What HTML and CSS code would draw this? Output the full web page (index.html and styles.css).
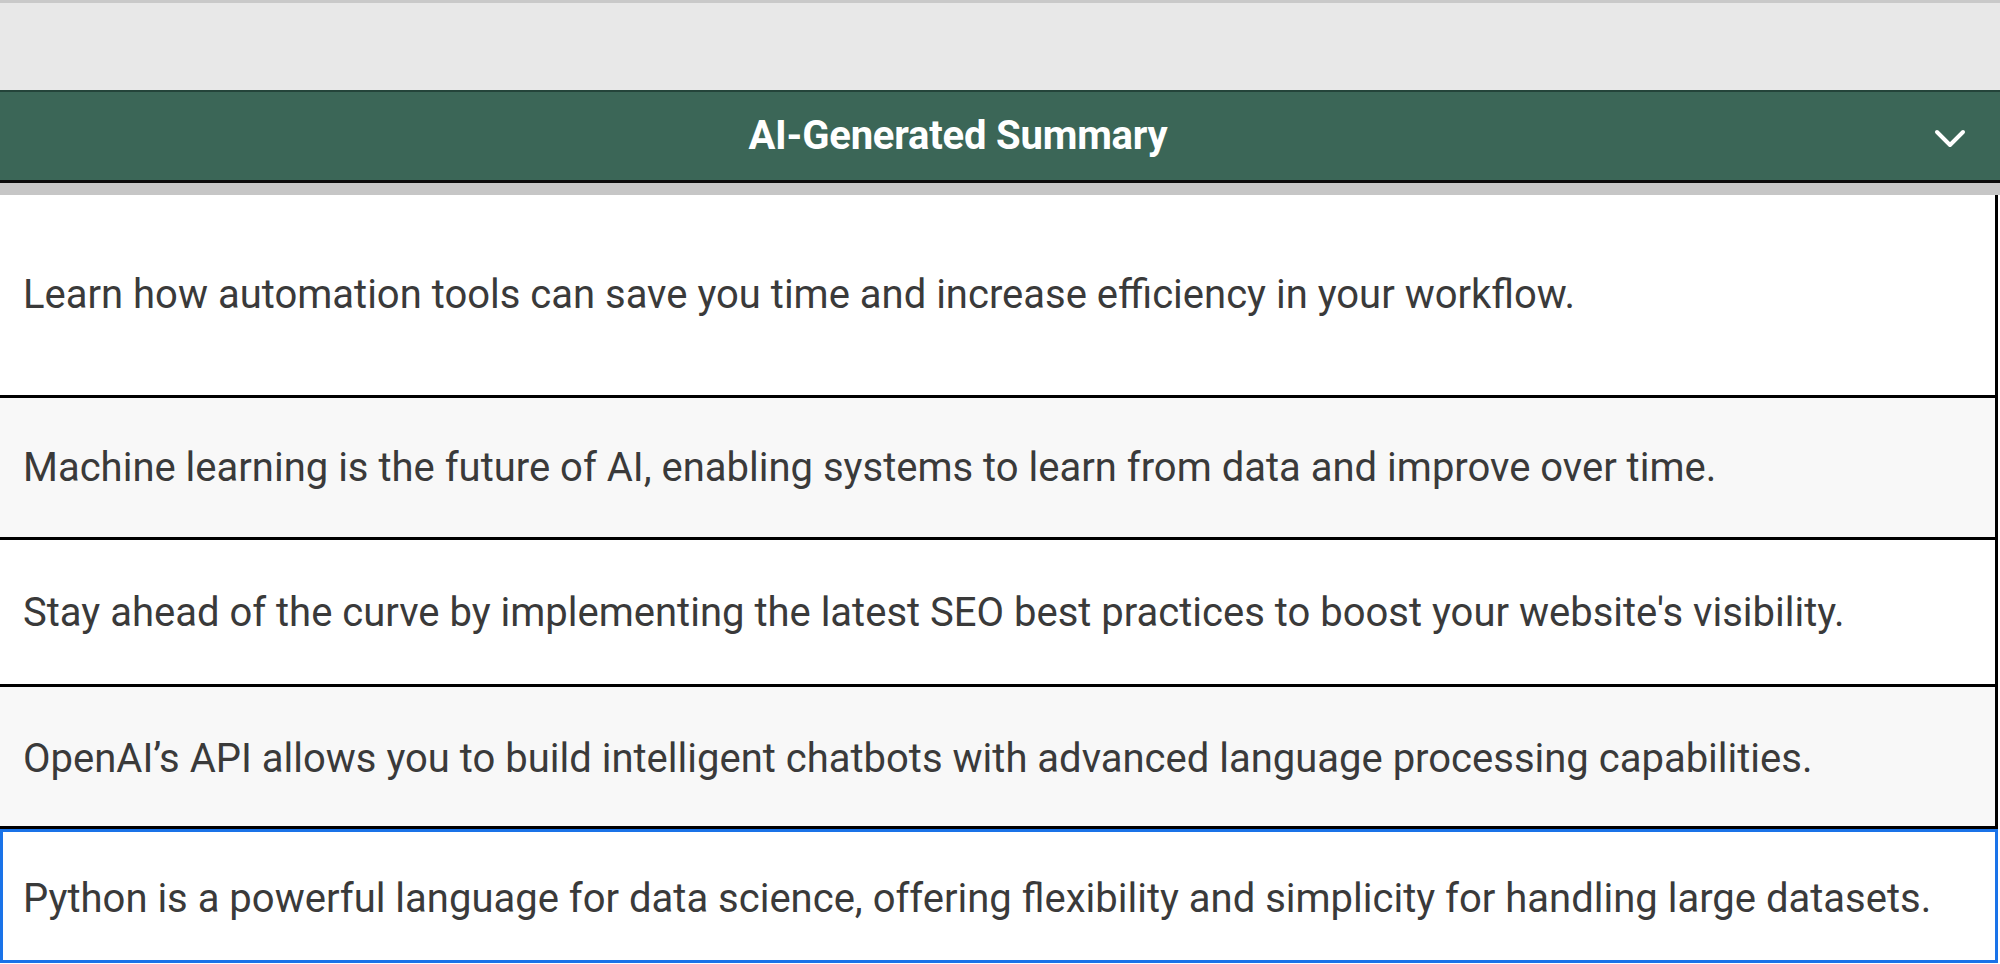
FILE: index.html
```html
<!DOCTYPE html>
<html lang="en">
<head>
<meta charset="utf-8">
<title>AI-Generated Summary</title>
<link rel="stylesheet" href="styles.css">
</head>
<body>
<div class="topbar"></div>
<div class="header">
  <h1 class="title">AI-Generated Summary</h1>
  <span class="toggle">
    <svg class="chevron" width="32" height="20" viewBox="0 0 32 20" aria-hidden="true">
      <polyline points="3,3 16,16 29,3" fill="none" stroke="#ffffff" stroke-width="4" stroke-linecap="round" stroke-linejoin="round"/>
    </svg>
  </span>
</div>
<div class="divider"></div>
<div class="list">
  <div class="row row-first">Learn how automation tools can save you time and increase efficiency in your workflow.</div>
  <div class="row row-alt row-second">Machine learning is the future of AI, enabling systems to learn from data and improve over time.</div>
  <div class="row row-third">Stay ahead of the curve by implementing the latest SEO best practices to boost your website's visibility.</div>
  <div class="row row-alt row-fourth">OpenAI’s API allows you to build intelligent chatbots with advanced language processing capabilities.</div>
  <div class="row row-focus">Python is a powerful language for data science, offering flexibility and simplicity for handling large datasets.</div>
</div>
</body>
</html>
```
FILE: styles.css
```css
html, body {
  margin: 0;
  padding: 0;
  background: #ffffff;
  overflow: hidden;
}

body {
  font-family: Roboto, "Liberation Sans", Arial, sans-serif;
}

.topbar {
  height: 87px;
  background: #e8e8e8;
  border-top: 3px solid #c9c9c9;
}

.header {
  display: flex;
  align-items: center;
  height: 88px;
  background: #3b6657;
  border-top: 2px solid #24443a;
  border-bottom: 3px solid #0a0a0a;
}

.title {
  flex: 1;
  margin: 0;
  text-align: center;
  font-size: 40px;
  font-weight: 700;
  color: #ffffff;
  line-height: 48px;
  letter-spacing: -0.2px;
}

.toggle {
  display: flex;
  align-items: center;
  padding: 6px 34px 0 18px;
}

.chevron {
  display: block;
}

.divider {
  height: 12px;
  background: #c6c6c6;
}

.list {
  border-right: 3px solid #000000;
  margin-right: 2px;
}

.row {
  padding: 47px 0 46px 23px;
  font-size: 40px;
  line-height: 48px;
  color: #3a3a3a;
  background: #ffffff;
  border-bottom: 3px solid #000000;
  white-space: nowrap;
}

.row-first {
  padding-top: 76px;
  padding-bottom: 76px;
}

.row-second {
  padding-top: 46px;
  padding-bottom: 45px;
}

.row-third {
  padding-top: 49px;
  padding-bottom: 47px;
}

.row-fourth {
  padding-top: 48px;
  padding-bottom: 43px;
}

.row-alt {
  background: #f8f8f8;
}

.row-focus {
  border: 3px solid #1a73e8;
  padding: 43px 0 37px 20px;
  margin-right: -3px;
}
```
